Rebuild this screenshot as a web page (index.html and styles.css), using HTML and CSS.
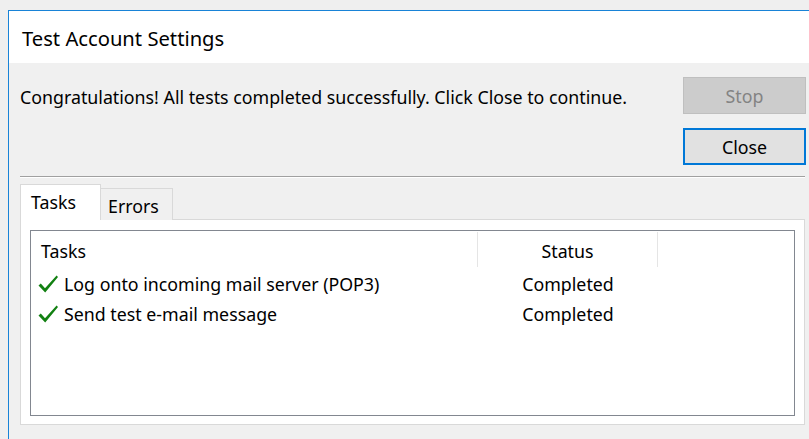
FILE: index.html
```html
<!DOCTYPE html>
<html lang="en">
<head>
<meta charset="utf-8">
<title>Test Account Settings</title>
<link rel="stylesheet" href="styles.css">
</head>
<body>
<div class="window">
  <div class="titlebar">Test Account Settings</div>
  <div class="content">
    <div class="top">
      <div class="message">Congratulations! All tests completed successfully. Click Close to continue.</div>
      <div class="buttons">
        <button class="btn btn-disabled" disabled>Stop</button>
        <button class="btn btn-default">Close</button>
      </div>
    </div>
    <div class="separator"></div>
    <div class="tabs">
      <div class="tab tab-active">Tasks</div>
      <div class="tab">Errors</div>
    </div>
    <div class="panel">
      <div class="list">
        <div class="list-header">
          <div class="col col-task">Tasks</div>
          <div class="col col-status">Status</div>
          <div class="col col-rest"></div>
        </div>
        <div class="row">
          <div class="col col-task">
            <svg class="check" width="22" height="20" viewBox="0 0 22 20"><path d="M1.5 11.5 L3.8 9.6 L8 14.2 L19.6 1.5 L21 2.9 L8.2 18.5 Z" fill="#128012"/></svg>
            <span>Log onto incoming mail server (POP3)</span>
          </div>
          <div class="col col-status">Completed</div>
        </div>
        <div class="row">
          <div class="col col-task">
            <svg class="check" width="22" height="20" viewBox="0 0 22 20"><path d="M1.5 11.5 L3.8 9.6 L8 14.2 L19.6 1.5 L21 2.9 L8.2 18.5 Z" fill="#128012"/></svg>
            <span>Send test e-mail message</span>
          </div>
          <div class="col col-status">Completed</div>
        </div>
      </div>
    </div>
  </div>
</div>
</body>
</html>
```
FILE: styles.css
```css
html, body {
  margin: 0;
  padding: 0;
}

body {
  background: #efefef;
  padding: 10px 0 0 8px;
  height: 439px;
  box-sizing: border-box;
  overflow: hidden;
  font-family: "Noto Sans", "Open Sans", sans-serif;
  color: #000;
}

.window {
  border-left: 1px solid #1883d7;
  border-top: 1px solid #1883d7;
  background: #f0f0f0;
  height: 100%;
}

.titlebar {
  background: #fff;
  height: 52px;
  box-sizing: border-box;
  padding-left: 13px;
  padding-top: 2px;
  display: flex;
  align-items: center;
  font-size: 20.2px;
  color: #000;
}

.content {
  padding: 14px 3px 0 11px;
}

.top {
  display: flex;
  justify-content: space-between;
}

.message {
  font-size: 17.8px;
  padding-top: 8px;
}

.buttons {
  display: flex;
  flex-direction: column;
  gap: 14px;
}

.btn {
  width: 123px;
  height: 37px;
  font-family: inherit;
  font-size: 17.8px;
  padding: 0;
  box-sizing: border-box;
}

.btn-disabled {
  background: #cccccc;
  border: 1px solid #bfbfbf;
  color: #838383;
}

.btn-default {
  background: #e1e1e1;
  border: 2px solid #0078d7;
  color: #000;
}

.separator {
  margin: 11px 1px 0 0;
  height: 1px;
  background: #a0a0a0;
  border-bottom: 1px solid #fff;
}

.tabs {
  display: flex;
  align-items: flex-end;
  margin-top: 6px;
  height: 36px;
  position: relative;
  z-index: 1;
}

.tab {
  height: 32px;
  box-sizing: border-box;
  padding: 2px 10px 0 7px;
  display: flex;
  align-items: center;
  font-size: 17.8px;
  border: 1px solid #d9d9d9;
  border-bottom: none;
  border-left: none;
  background: #f0f0f0;
  width: 72px;
}

.tab-active {
  height: 36px;
  width: 81px;
  background: #fff;
  border-left: 1px solid #d9d9d9;
  padding-left: 10px;
  padding-top: 0;
  padding-bottom: 1px;
}

.panel {
  margin-right: 1px;
  height: 206px;
  box-sizing: border-box;
  background: #fff;
  border: 1px solid #d9d9d9;
  margin-top: -1px;
  padding: 10px 9px 0 9px;
}

.list {
  height: 186px;
  box-sizing: border-box;
  border: 1px solid #828790;
  background: #fff;
  font-size: 17.8px;
}

.list-header {
  display: flex;
  height: 37px;
}

.list-header .col {
  display: flex;
  align-items: center;
  border-right: 1px solid #e5e5e5;
  margin-top: 1px;
  padding-top: 2px;
  height: 35px;
}

.list-header .col-rest {
  border-right: none;
}

.col-task {
  width: 447px;
  box-sizing: border-box;
  padding-left: 10px;
}

.col-status {
  width: 180px;
  box-sizing: border-box;
  justify-content: center;
}

.row {
  display: flex;
  height: 30px;
  box-sizing: border-box;
  padding-top: 1px;
  align-items: center;
}

.row .col-task {
  display: flex;
  align-items: center;
  padding-left: 6px;
  gap: 5px;
}

.row .col-status {
  text-align: center;
}

.check {
  flex: none;
}
```
